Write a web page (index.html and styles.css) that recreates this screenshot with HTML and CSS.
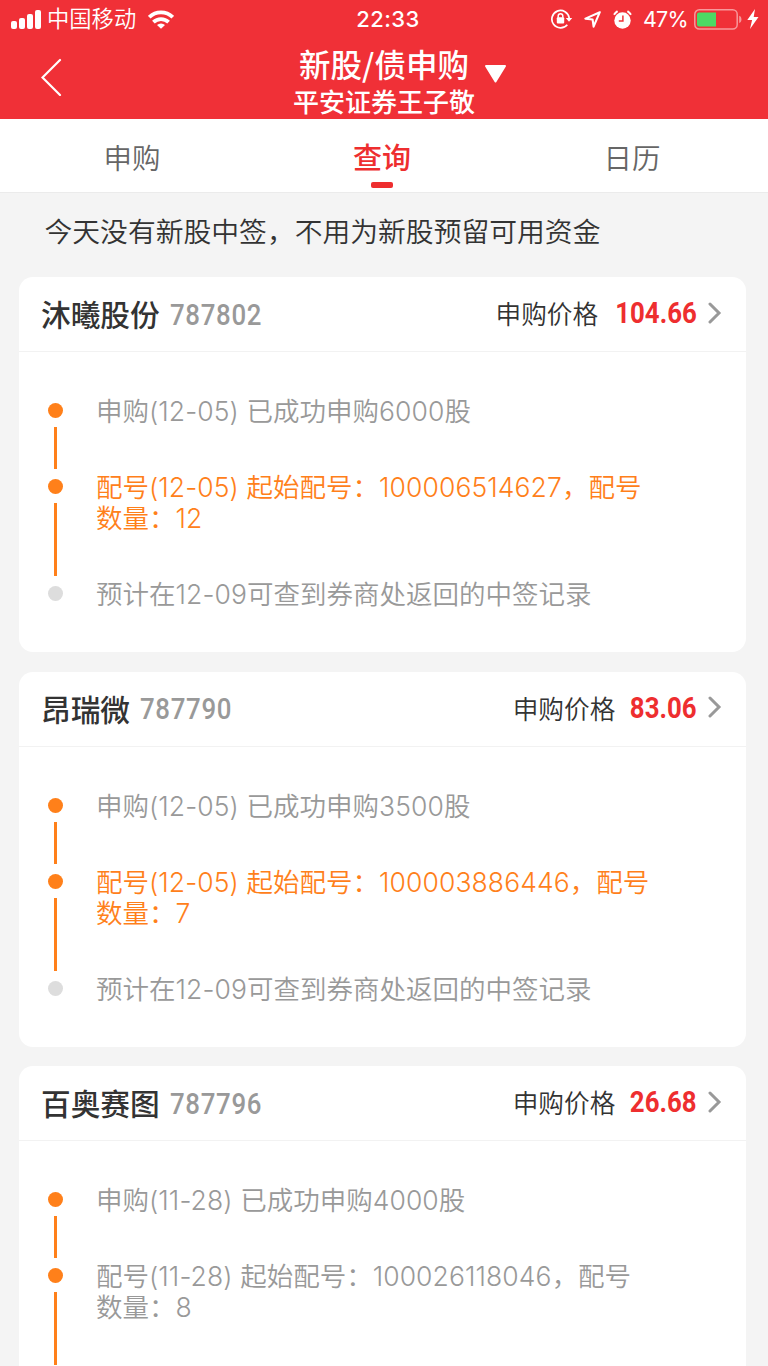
FILE: index.html
```html
<!DOCTYPE html>
<html lang="zh-CN">
<head>
  <meta charset="UTF-8" />
  <title>新股/债申购</title>
  <link rel="stylesheet" href="styles.css">
</head>
<body>

  <header class="header">
    <div class="status">
      <div class="status-left">
        <svg class="signal" width="30" height="19" viewBox="0 0 30 19" fill="#fff">
          <rect x="0" y="11" width="6" height="8" rx="2"/>
          <rect x="8" y="8" width="6" height="11" rx="2"/>
          <rect x="16" y="4" width="6" height="15" rx="2"/>
          <rect x="24" y="0" width="6" height="19" rx="2"/>
        </svg>
        <span class="carrier">中国移动</span>
        <svg width="26" height="19" viewBox="0 0 26 19" fill="none" stroke="#fff" stroke-width="3.8">
          <path d="M1.2 7.200a17 17 0 0 1 23.600 0"/>
          <path d="M5.400 12.200a11 11 0 0 1 15.200 0"/>
          <path d="M13 18.800l-4-3.800a5.800 5.800 0 0 1 8 0z" fill="#fff" stroke="none"/>
        </svg>
      </div>
      <span class="clock">22:33</span>
      <div class="status-right">
        <svg width="22" height="20" viewBox="0 0 22 20" fill="none" stroke="#fff" stroke-width="1.7">
          <path d="M16.300 15.700A8.700 8.700 0 1 1 18.200 9"/>
          <path d="M14.800 9h6.400L18 12.800z" fill="#fff" stroke="none"/>
          <rect x="5.8" y="8.3" width="7.4" height="6.2" rx="1" fill="#fff" stroke="none"/>
          <path d="M7.200 8.800V7a2.300 2.300 0 0 1 4.600 0v1.800" stroke-width="1.5"/>
        </svg>
        <svg class="location" width="17" height="17" viewBox="0 0 17 17" fill="none" stroke="#fff" stroke-width="2.1" stroke-linejoin="round">
          <path d="M15.800 1.200L1.400 7.600l7.200.9 1 7.100z"/>
        </svg>
        <svg class="alarm" width="19" height="19" viewBox="0 0 19 19">
          <circle cx="9.5" cy="10.5" r="8.2" fill="#fff"/>
          <path d="M1 4.800A13 13 0 0 1 4.600 1.200M18 4.800a13 13 0 0 0-3.600-3.600" fill="none" stroke="#fff" stroke-width="2"/>
          <path d="M9.900 5.500v5.400H5.800" fill="none" stroke="#f03037" stroke-width="1.5"/>
        </svg>
        <span class="percent">47%</span>
        <svg width="48" height="21" viewBox="0 0 48 21">
          <rect x=".8" y=".8" width="42.4" height="19.2" rx="4.5" fill="none" stroke="#fff" stroke-opacity=".5" stroke-width="1.5"/>
          <path d="M45.200 6.800c3 .8 3 6.400 0 7.200z" fill="#fff" fill-opacity=".5"/>
          <path d="M5 3.500h17v14H5a2 2 0 0 1-2-2v-10a2 2 0 0 1 2-2z" fill="#4cd964"/>
        </svg>
        <svg class="bolt" width="12" height="20" viewBox="0 0 12 20" fill="#fff">
          <path d="M8 0L.3 11h4.800L3 20l8.500-12H6.700z"/>
        </svg>
      </div>
    </div>

    <div class="navbar">
      <svg class="back" width="22" height="38" viewBox="0 0 22 38" fill="none" stroke="#fff" stroke-width="2.2" stroke-linecap="round">
        <path d="M19 2L1.500 19.500L19 37"/>
      </svg>
      <div class="titles">
        <div class="title">新股/债申购
          <svg class="caret" width="24" height="20" viewBox="0 0 24 20" fill="#fff" stroke="#fff" stroke-width="2" stroke-linejoin="round">
            <path d="M2 2h19L11.500 17.500z"/>
          </svg>
        </div>
        <div class="account">平安证券王子敬</div>
      </div>
    </div>
  </header>

  <nav class="tabs">
    <a class="tab">申购</a>
    <a class="tab active">查询</a>
    <a class="tab">日历</a>
  </nav>

  <p class="notice">今天没有新股中签，不用为新股预留可用资金</p>

  <main class="list">
    <section class="card">
      <div class="card-head">
        <h2 class="name">沐曦股份</h2>
        <span class="code">787802</span>
        <span class="label">申购价格</span>
        <span class="price">104.66</span>
        <svg class="arrow" width="14" height="22" viewBox="0 0 14 22"><path d="M2 2l9 9l-9 9"/></svg>
      </div>
      <ul class="steps">
        <li class="step done"><div class="mark"></div><p>申购<span class="num">(12-05) </span>已成功申购<span class="num">6000</span>股</p></li>
        <li class="step done current"><div class="mark"></div><p>配号<span class="num">(12-05) </span>起始配号：<span class="num">100006514627</span>，配号<br>数量：<span class="num">12</span></p></li>
        <li class="step"><div class="mark"></div><p>预计在<span class="num">12-09</span>可查到券商处返回的中签记录</p></li>
      </ul>
    </section>

    <section class="card">
      <div class="card-head">
        <h2 class="name">昂瑞微</h2>
        <span class="code">787790</span>
        <span class="label">申购价格</span>
        <span class="price">83.06</span>
        <svg class="arrow" width="14" height="22" viewBox="0 0 14 22"><path d="M2 2l9 9l-9 9"/></svg>
      </div>
      <ul class="steps">
        <li class="step done"><div class="mark"></div><p>申购<span class="num">(12-05) </span>已成功申购<span class="num">3500</span>股</p></li>
        <li class="step done current"><div class="mark"></div><p>配号<span class="num">(12-05) </span>起始配号：<span class="num">100003886446</span>，配号<br>数量：<span class="num">7</span></p></li>
        <li class="step"><div class="mark"></div><p>预计在<span class="num">12-09</span>可查到券商处返回的中签记录</p></li>
      </ul>
    </section>

    <section class="card">
      <div class="card-head">
        <h2 class="name">百奥赛图</h2>
        <span class="code">787796</span>
        <span class="label">申购价格</span>
        <span class="price">26.68</span>
        <svg class="arrow" width="14" height="22" viewBox="0 0 14 22"><path d="M2 2l9 9l-9 9"/></svg>
      </div>
      <ul class="steps">
        <li class="step done"><div class="mark"></div><p>申购<span class="num">(11-28) </span>已成功申购<span class="num">4000</span>股</p></li>
        <li class="step done"><div class="mark"></div><p>配号<span class="num">(11-28) </span>起始配号：<span class="num">100026118046</span>，配号<br>数量：<span class="num">8</span></p></li>
      </ul>
    </section>
  </main>

</body>
</html>
```
FILE: styles.css
```css
* {
  box-sizing: border-box;
}
html, body {
  margin: 0; padding: 0;
  height: 1366px;
  overflow: hidden;
}
body {
  background: #f4f4f4;
  color: #333;
  font-family: Inter, "Noto Sans CJK SC", sans-serif;
}
svg {
  display: block;
  flex: none;
}

/* header */
.header {
  height: 119px;
  background: #f03037;
  color: #fff;
}
.status {
  display: grid;
  grid-template-columns: 1fr auto 1fr;
  align-items: center;
  height: 38px;
  padding: 0 9px 0 11px;
  font-size: 22px;
}
.status-left, .status-right {
  display: flex;
  align-items: center;
}
.status-right {
  justify-content: flex-end;
}
.carrier {
  margin: 0 12px 0 6px;
  font-size: 22.300px;
  font-weight: 350;
  line-height: 38px;
}
.clock {
  padding-left: 6px;
  font-weight: 500;
  letter-spacing: 0.400px;
}
.location {
  margin-left: 11px;
}
.alarm {
  margin-left: 12px;
}
.percent {
  margin: 0 6px 0 11px;
  font-size: 21.500px;
  letter-spacing: -0.700px;
}
.bolt {
  margin-left: 5px;
}
.navbar {
  display: flex;
  height: 81px;
}
.back {
  margin: 20px 0 0 41px;
}
.titles {
  flex: 1;
  padding-right: 63px;
  text-align: center;
}
.title {
  position: relative;
  width: 171px;
  margin: 6px auto 0;
  font-family: "Noto Sans CJK SC", sans-serif;
  font-size: 31.500px;
  font-weight: 500;
  line-height: 38px;
  white-space: nowrap;
}
.caret {
  position: absolute;
  left: 185px;
  top: 20px;
}
.account {
  padding-top: 4px;
  font-size: 26px;
  font-weight: 500;
  line-height: 34px;
}

/* tabs */
.tabs {
  display: flex;
  height: 74px;
  padding: 0 11px 0 7px;
  background: #fff;
  border-bottom: 1px solid #ebebeb;
}
.tab {
  display: flex;
  flex: 1;
  flex-direction: column;
  align-items: center;
  color: #666;
  font-size: 28.500px;
  font-weight: 350;
  line-height: 79px;
}
.tab.active {
  color: #ee2e2f;
  font-size: 29px;
  font-weight: 500;
}
.tab.active::after {
  content: "";
  width: 22px;
  height: 6px;
  margin-top: -16px;
  border-radius: 2px;
  background: #ee2e2f;
}

.notice {
  height: 84px;
  margin: 0;
  padding-left: 44.500px;
  font-size: 27.800px;
  font-weight: 350;
  line-height: 78px;
}

/* cards */
.card {
  margin: 0 22.500px 19.600px 19px;
  border-radius: 14px;
  background: #fff;
}
.card-head {
  display: flex;
  align-items: center;
  height: 75px;
  padding: 0 24px 3px 22px;
  border-bottom: 1px solid #f2f2f2;
}
.name {
  margin: 2px 0 0;
  font-size: 29.700px;
  font-weight: 500;
}
/* narrow digits */
.code, .price {
  font-family: Roboto, sans-serif;
  font-size: 30px;
}
.code {
  flex: 1;
  margin: 3px 0 0 10px;
  color: #999;
  font-weight: 500;
  letter-spacing: 0.800px;
  transform: scaleX(.86);
  transform-origin: left;
}
.label {
  font-size: 25.700px;
  font-weight: 350;
}
.price {
  margin: 0 11px 0 3.500px;
  color: #ee2e2f;
  font-weight: 700;
  transform: scaleX(.86);
  transform-origin: right;
}
.arrow {
  fill: none;
  stroke: #999;
  stroke-width: 3;
  stroke-linecap: round;
}

/* timeline */
.steps {
  margin: 0;
  padding: 43px 0 43px 29px;
  list-style: none;
}
.step {
  display: flex;
  color: #999;
  font-size: 26.500px;
  font-weight: 350;
  line-height: 31px;
}
.step.current {
  color: #ff801a;
}
.step p {
  margin: 1px 0 0 33px;
  padding-bottom: 44px;
  white-space: nowrap;
}
.step:nth-child(3) p {
  padding-bottom: 0;
  margin-bottom: -1px;
}
.num {
  letter-spacing: 0.100px;
}
.mark {
  display: flex;
  flex-direction: column;
  align-items: center;
  width: 15px;
  padding: 8px 0 2px;
}
.mark::before {
  content: "";
  width: 15px;
  height: 15px;
  border-radius: 50%;
  background: #ddd;
}
.done .mark::before {
  background: #ff801a;
}
.done .mark::after {
  content: "";
  flex: 1;
  width: 2.500px;
  margin-top: 9px;
  background: #ff801a;
}
```
